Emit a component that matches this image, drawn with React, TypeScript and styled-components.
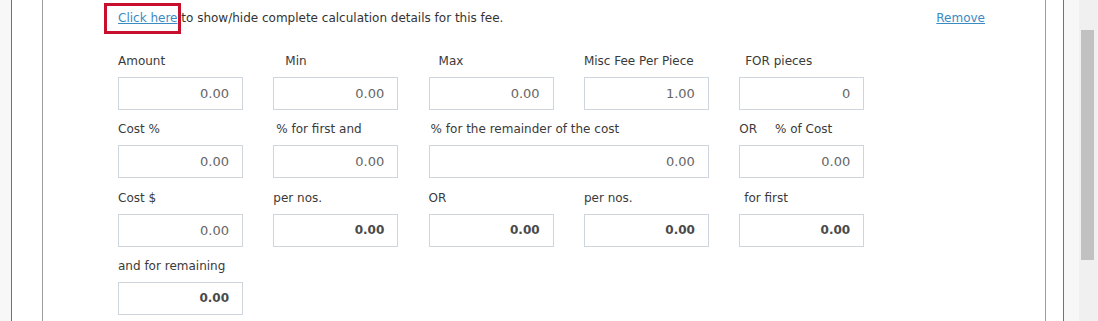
import React from "react";
import styled, { createGlobalStyle } from "styled-components";

const Global = createGlobalStyle`
  html, body { margin: 0; padding: 0; background: #ffffff; }
  body { font-family: "DejaVu Sans", "Liberation Sans", sans-serif; }
  * { box-sizing: border-box; }
`;

const Page = styled.div`
  display: flex;
  height: 321px;
  width: 1098px;
  overflow: hidden;
  background: #f7f7f7;
`;

const Gutter = styled.div<{ $w: number }>`
  width: ${(p) => p.$w}px;
  flex: none;
  background: #f7f7f7;
`;

const Frame = styled.div`
  flex: 1;
  display: flex;
  background: #ffffff;
  border-left: 1px solid #3f7fb5;
  border-right: 1px solid #3f7fb5;
  padding: 0 17px 0 30px;
`;

const Card = styled.div`
  flex: 1;
  border-left: 1px solid #9d9d9d;
  border-right: 1px solid #9d9d9d;
  padding: 10px 60px 0 75px;
  color: #333333;
  font-size: 12px;
`;

const Header = styled.div`
  display: flex;
  justify-content: space-between;
  line-height: 16px;
  margin-bottom: 27px;
`;

const Intro = styled.div`
  white-space: nowrap;
`;

const Link = styled.a`
  color: #3b8ac3;
  text-decoration: underline;
  cursor: pointer;
  position: relative;
`;

const Highlight = styled.span`
  position: absolute;
  left: -14px;
  top: -8px;
  right: -4px;
  bottom: -9px;
  border: 3px solid #c8102e;
  pointer-events: none;
`;

const Grid = styled.div`
  display: grid;
  grid-template-columns: repeat(5, 125px);
  column-gap: 30.3px;
  row-gap: 11.3px;
`;

const Field = styled.div<{ $span?: number }>`
  grid-column: span ${(p) => p.$span ?? 1};
  display: flex;
  flex-direction: column;
  gap: 8px;
`;

const Label = styled.div<{ $indent?: number }>`
  line-height: 16px;
  height: 16px;
  padding-left: ${(p) => p.$indent ?? 0}px;
  white-space: pre;
  color: #3a3a3a;
`;

const Gap = styled.span`
  display: inline-block;
  width: 18px;
`;

const Input = styled.div<{ $bold?: boolean }>`
  height: 33px;
  border: 1px solid #cfd5dc;
  display: flex;
  align-items: center;
  justify-content: flex-end;
  padding-right: 13px;
  font-size: ${(p) => (p.$bold ? "12px" : "13px")};
  color: ${(p) => (p.$bold ? "#4a4a4a" : "#666666")};
  font-weight: ${(p) => (p.$bold ? 700 : 400)};
`;

const Track = styled.div`
  width: 19px;
  flex: none;
  background: #f0f0f0;
  padding: 30px 4px 0 2px;
`;

const Thumb = styled.div`
  height: 230px;
  background: #c1c1c1;
`;

type F = { label: React.ReactNode; value: string; bold?: boolean; indent?: number; span?: number };

const fields: F[] = [
  { label: "Amount", value: "0.00" },
  { label: "Min", value: "0.00", indent: 12 },
  { label: "Max", value: "0.00", indent: 10 },
  { label: "Misc Fee Per Piece", value: "1.00" },
  { label: "FOR pieces", value: "0", indent: 6 },
  { label: "Cost %", value: "0.00" },
  { label: "% for first and", value: "0.00", indent: 3 },
  { label: "% for the remainder of the cost", value: "0.00", indent: 2, span: 2 },
  { label: <>OR<Gap />% of Cost</>, value: "0.00" },
  { label: "Cost $", value: "0.00" },
  { label: "per nos.", value: "0.00", bold: true },
  { label: "OR", value: "0.00", bold: true },
  { label: "per nos.", value: "0.00", bold: true },
  { label: "for first", value: "0.00", bold: true, indent: 5 },
  { label: "and for remaining", value: "0.00", bold: true },
];

export default function App() {
  return (
    <>
      <Global />
      <Page>
        <Gutter $w={11} />
        <Frame>
          <Card>
            <Header>
              <Intro>
                <Link>
                  Click here
                  <Highlight />
                </Link>{" "}
                to show/hide complete calculation details for this fee.
              </Intro>
              <Link>Remove</Link>
            </Header>
            <Grid>
              {fields.map((f, i) => (
                <Field key={i} $span={f.span}>
                  <Label $indent={f.indent}>{f.label}</Label>
                  <Input $bold={f.bold}>{f.value}</Input>
                </Field>
              ))}
            </Grid>
          </Card>
        </Frame>
        <Gutter $w={15} />
        <Track>
          <Thumb />
        </Track>
      </Page>
    </>
  );
}
